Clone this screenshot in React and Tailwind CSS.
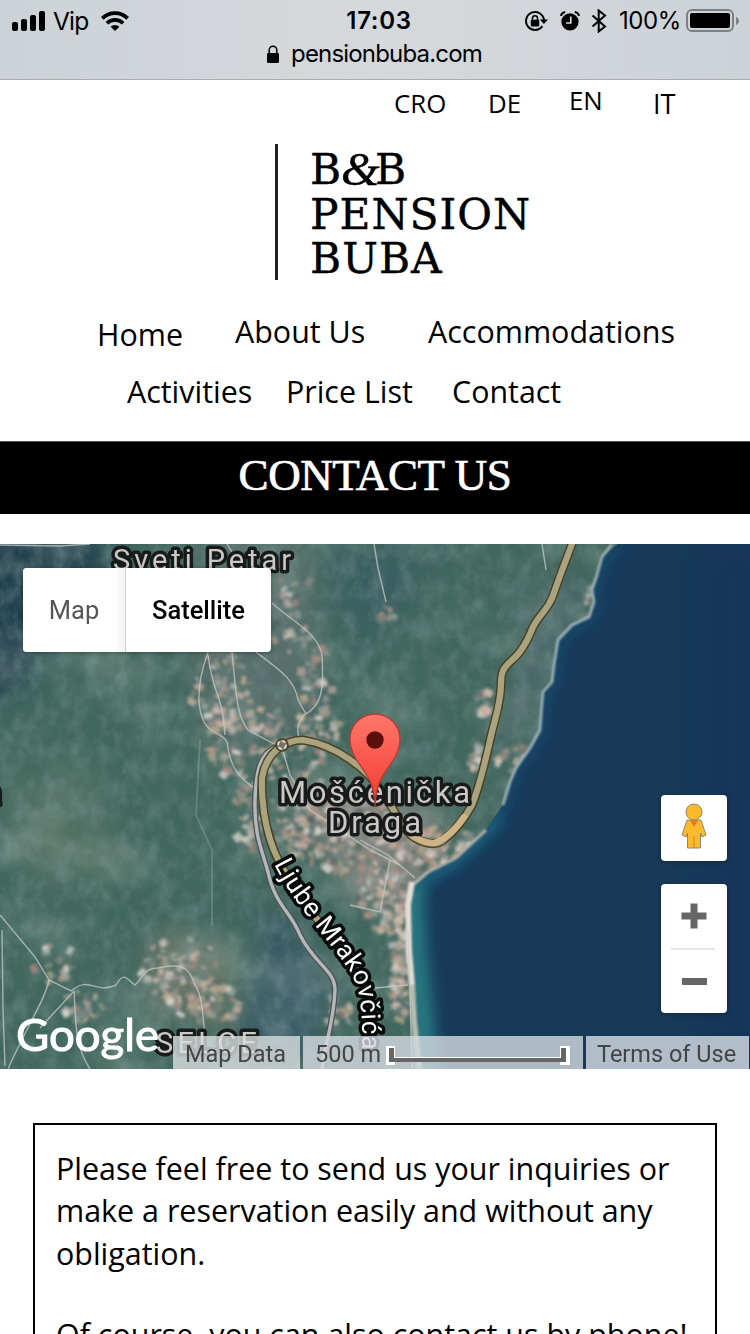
import React from "react";

function seeded(seed) {
  let s = seed;
  return () => {
    s = (s * 16807) % 2147483647;
    return s / 2147483647;
  };
}

const clusters = [
  // cx, cy, rx, ry, count
  [222, 690, 32, 45, 80],
  [245, 740, 35, 40, 70],
  [300, 740, 42, 45, 80],
  [315, 675, 18, 50, 40],
  [285, 620, 22, 30, 25],
  [270, 580, 40, 30, 25],
  [300, 820, 45, 35, 110],
  [350, 830, 60, 40, 160],
  [248, 810, 12, 35, 35],
  [435, 845, 50, 22, 130],
  [385, 895, 30, 35, 110],
  [400, 960, 9, 60, 100],
  [485, 700, 9, 13, 20],
  [478, 755, 10, 14, 20],
  [515, 755, 18, 18, 25],
  [180, 970, 38, 38, 90],
  [205, 1000, 34, 22, 45],
  [55, 960, 22, 20, 25],
  [85, 1003, 24, 14, 25],
  [340, 1010, 12, 18, 20],
  [386, 610, 8, 8, 9],
  [592, 600, 8, 18, 12],
];
const tones = ["#c5a9a0", "#d8c3b6", "#a0958c", "#e6dcd6", "#6c7c76", "#b48d83", "#a3aca4", "#c2ae90", "#4d6461"];

function houses() {
  const r = seeded(4242);
  const out = [];
  clusters.forEach(([cx, cy, rx, ry, n]) => {
    for (let i = 0; i < n; i++) {
      const a = r() * Math.PI * 2;
      const d = Math.sqrt(r());
      out.push({
        x: cx + Math.cos(a) * rx * d,
        y: cy + Math.sin(a) * ry * d,
        w: 3 + r() * 6,
        h: 3 + r() * 6,
        t: r() * 90,
        c: tones[Math.floor(r() * tones.length)],
        o: 0.35 + r() * 0.5,
      });
    }
  });
  return out;
}
const houseList = houses();

const coast =
  "M618 544 L602 557 L597 575 L592 590 L594 602 L589 617 L572 625 L558 640 L554 665 L552 682 L543 692 L541 715 L540 730 L530 748 L516 768 L510 782 L503 805 L486 830 L456 858 L428 872 L414 884 L410 905 L411 950 L414 990 L417 1020 L421 1069";
const mainRoad =
  "M572 544 C568 555 561 572 555 590 C549 610 540 613 533 627 C527 642 521 653 512 660 C503 668 501 672 501 684 C501 705 494 720 489 745 C483 770 480 785 472 805 C465 818 455 831 442 841 C434 846 424 843 415 838 C402 830 397 813 384 795 C368 768 335 745 303 740 C285 740 266 752 262 778 C261 810 268 845 284 870 C300 902 322 925 348 955";
const sideRoad =
  "M278 746 C260 752 256 770 255 800 C254 835 262 850 268 872 C275 905 291 912 300 935 C315 965 335 970 335 990 C334 1020 326 1040 322 1069";
const paths = [
  "M272 603 C290 620 318 632 322 655 C324 690 322 706 304 715 C296 725 296 735 302 742",
  "M208 652 C198 680 196 705 204 722 C212 736 222 732 227 742 C231 775 245 780 256 790",
  "M256 652 C280 670 295 680 298 700 L306 714",
  "M232 652 C236 690 236 715 248 730 L278 746",
  "M208 655 C214 700 222 690 225 735",
  "M0 915 L35 957 L49 980 L71 991 C90 975 95 995 116 985 C125 970 127 980 135 985 C145 975 145 968 158 968 C185 962 190 970 195 985 C204 998 202 1020 206 1040",
  "M49 980 C45 1000 25 1030 8 1069 M74 991 L40 1028 M74 991 C76 1020 74 1045 90 1069",
  "M2 930 L3 1010 L5 1066",
  "M374 544 L378 568 L386 602",
  "M542 544 L546 570",
  "M0 545 L60 546 L90 544",
  "M282 748 L290 775 L310 810 L370 850 L400 865",
  "M360 840 L388 855 L415 878 M350 905 L380 912 L390 860",
  "M227 544 L240 565",
  "M408 930 L410 985 L412 1069 M375 988 L408 985",
];

function MapArt() {
  return (
    <svg viewBox="0 544 750 525" className="absolute inset-0 h-[525px] w-[750px]">
      <defs>
        <filter id="noise" x="0" y="0" width="100%" height="100%">
          <feTurbulence type="fractalNoise" baseFrequency="0.07 0.05" numOctaves="5" seed="8" />
          <feColorMatrix values="0 0 0 0 0.18  0 0 0 0 0.29  0 0 0 0 0.29  1.1 0 0 0 -0.42" />
        </filter>
        <filter id="light" x="0" y="0" width="100%" height="100%">
          <feTurbulence type="fractalNoise" baseFrequency="0.012 0.016" numOctaves="6" seed="21" />
          <feColorMatrix values="0 0 0 0 0.45  0 0 0 0 0.53  0 0 0 0 0.46  0 1.3 0 0 -0.6" />
        </filter>
        <filter id="soft" x="-5%" y="-5%" width="110%" height="110%">
          <feGaussianBlur stdDeviation="1.4" />
        </filter>
        <filter id="crisp" x="-5%" y="-5%" width="110%" height="110%">
          <feGaussianBlur stdDeviation="0.8" />
        </filter>
        <filter id="wide" x="-30%" y="-30%" width="160%" height="160%">
          <feGaussianBlur stdDeviation="13" />
        </filter>
        <filter id="shore" filterUnits="userSpaceOnUse" x="350" y="500" width="420" height="620">
          <feGaussianBlur stdDeviation="7" />
        </filter>
        <clipPath id="sea">
          <path d={coast + " L750 1069 L750 544 Z"} />
        </clipPath>
        <linearGradient id="pin" x1="0" y1="0" x2="0" y2="1">
          <stop offset="0" stopColor="#ff776b" />
          <stop offset="1" stopColor="#f23a2f" />
        </linearGradient>
      </defs>
      <rect x="0" y="544" width="750" height="525" fill="#42675e" />
      <g filter="url(#wide)">
        <path d="M-20 530 L120 540 L60 620 L20 690 L-20 700 Z" fill="#233f50" />
        <path d="M330 544 L430 544 L410 600 L350 650 Z" fill="#3a5f60" />
        <path d="M540 600 L590 560 L560 640 L500 760 L480 800 Z" fill="#4c666a" />
        <path d="M270 900 L330 990 L300 1069 L240 1050 Z" fill="#385966" />
        <path d="M200 540 L310 540 L320 720 L230 760 L190 690 Z" fill="#566e6a" />
        <path d="M280 780 L440 810 L420 900 L360 900 Z" fill="#84847e" />
        <path d="M150 930 L230 950 L230 1030 L150 1010 Z" fill="#69786b" />
        <path d="M0 780 L100 760 L130 880 L30 890 Z" fill="#4f7064" />
      </g>
      <rect x="0" y="544" width="750" height="525" filter="url(#noise)" opacity="0.85" />
      <rect x="0" y="544" width="750" height="525" filter="url(#light)" opacity="0.45" />
      <g filter="url(#soft)">
        {houseList.map((h, i) => (
          <rect
            key={i}
            x={h.x}
            y={h.y}
            width={h.w}
            height={h.h}
            fill={h.c}
            opacity={h.o}
            transform={`rotate(${h.t} ${h.x} ${h.y})`}
          />
        ))}
      </g>
      <path d={coast + " L750 1069 L750 544 Z"} fill="#183a58" />
      <g clipPath="url(#sea)">
        <path d={coast} fill="none" stroke="#194c6d" strokeWidth="12" filter="url(#shore)" />
        <path d="M500 815 L456 858 L414 884" fill="none" stroke="#1d607a" strokeWidth="14" filter="url(#shore)" />
        <path d="M414 884 L412 905 L415 950 L422 1020 L428 1085" fill="none" stroke="#277780" strokeWidth="24" filter="url(#shore)" />
        <rect x="700" y="544" width="70" height="525" fill="#14335c" opacity="0.5" filter="url(#wide)" />
      </g>
      <g fill="none" strokeLinejoin="round" filter="url(#crisp)">
        <path d="M612 544 L602 557 L597 575 L592 590 L594 602 L589 617 L572 625 L558 640 L554 665 L552 682 L543 692 L541 715 L540 730 L530 748 L516 768 L510 782 L503 805" stroke="#a5b8bd" strokeWidth="2.6" />
        <path d="M486 830 L456 858 L428 872 L414 884" stroke="#b9b3a9" strokeWidth="3" />
        <path d="M412 882 L408 905 L409 950 L412 985" stroke="#e5ddd6" strokeWidth="6" />
        <path d="M412 985 L414 1020 L419 1069" stroke="#b5bdae" strokeWidth="6" />
      </g>
      <g fill="none" stroke="#c5cbc7" strokeOpacity="0.75" strokeWidth="1.4">
        {paths.map((d) => (
          <path key={d} d={d} />
        ))}
      </g>
      <path d="M200 740 L196 815 L212 850 L212 925" fill="none" stroke="#9fb0a8" strokeOpacity="0.35" strokeWidth="2" />
      <g fill="none" strokeLinecap="round">
        <path d={sideRoad} stroke="#4c5355" strokeWidth="6" />
        <path d={sideRoad} stroke="#b4b8ba" strokeWidth="3.4" />
        <path d={mainRoad} stroke="#48401f" strokeWidth="9" />
        <path d={mainRoad} stroke="#aaa380" strokeWidth="6.2" />
        <path d="M464 817 C455 831 442 841 434 843 C424 843 415 838 408 832" stroke="#cdb487" strokeWidth="6.2" />
      </g>
      <circle cx="282" cy="745" r="6" fill="#77736a" stroke="#48401f" strokeWidth="1.5" />
      <circle cx="282" cy="745" r="4" fill="none" stroke="#d2d2cc" strokeWidth="2" strokeDasharray="4 2" />

      <g fontFamily="Roboto, sans-serif" fill="#ccc8c4" stroke="#171b1b" strokeWidth="7" strokeLinejoin="round" paintOrder="stroke">
        <text x="113" y="570" fontSize="29" textLength="178">Sveti Petar</text>
        <text x="279" y="803" fontSize="31" textLength="191">Mošćenička</text>
        <text x="328" y="833" fontSize="31" textLength="93">Draga</text>
        <text x="156" y="1053" fontSize="29" textLength="101">SELCE</text>
        <text x="-16" y="804" fontSize="31">a</text>
      </g>
      <path id="street" d="M274 864 C292 902 324 934 344 963 C361 984 363 1005 362 1060" fill="none" />
      <text fontFamily="Roboto, sans-serif" fontSize="26" fill="#fff" stroke="#080a0a" strokeWidth="7" strokeLinejoin="round" paintOrder="stroke">
        <textPath href="#street" textLength="212">Ljube Mrakovčića</textPath>
      </text>
      <path
        d="M375 806 C374 780 365 773 356 759 C352 752 350 747 350 739 A25 25 0 0 1 400 739 C400 747 398 752 394 759 C385 773 376 780 375 806 Z"
        fill="url(#pin)"
        stroke="#b83a32"
        strokeWidth="1.3"
      />
      <circle cx="375" cy="740" r="8.7" fill="#5c100d" />
      <text x="16" y="1051" fontFamily="Lato, sans-serif" fontSize="44" fill="#fff" stroke="#fff" strokeWidth="1" textLength="143" lengthAdjust="spacingAndGlyphs">
        Google
      </text>
    </svg>
  );
}

function StatusBar() {
  return (
    <div className="h-20 border-b border-[#a9adb0] bg-linear-to-r from-[#cdd2d6] via-[#d5d9dc] to-[#cdd2d6] font-['Inter',sans-serif] text-black">
      <div className="grid h-10 grid-cols-[1fr_auto_1fr] items-center pl-3">
        <div className="flex items-center">
          <div className="flex h-5 w-[33px] items-end gap-[3px]">
            <i className="h-[9px] w-1.5 rounded-[2px] bg-black" />
            <i className="h-3 w-1.5 rounded-[2px] bg-black" />
            <i className="h-4 w-1.5 rounded-[2px] bg-black" />
            <i className="h-5 w-1.5 rounded-[2px] bg-black" />
          </div>
          <span className="ml-2 w-9 text-[24.5px] leading-10 tracking-[-0.8px]">Vip</span>
          <svg className="ml-3 h-5 w-7" viewBox="0 0 28 20">
            <g fill="none" stroke="#000" strokeWidth="3.7">
              <path d="M1.3 7.4 A18 18 0 0 1 26.7 7.4" />
              <path d="M5.9 12.2 A11.5 11.5 0 0 1 22.1 12.2" />
            </g>
            <path d="M14 20 L9.6 15.7 A6.3 6.3 0 0 1 18.4 15.7 Z" />
          </svg>
        </div>
        <span className="-ml-1 w-[72px] text-center text-[24px] leading-10 font-semibold tracking-[0.7px] whitespace-nowrap">
          17:03
        </span>
        <div className="flex items-center justify-end pr-[11px]">
          <svg className="h-6 w-6" viewBox="0 0 24 24">
            <path d="M18.4 17.2 A9 9 0 1 1 20 11" fill="none" stroke="#000" strokeWidth="2" />
            <path d="M15.8 10.5 H24 L19.9 15 Z" />
            <rect x="6.8" y="10.8" width="8.4" height="6.6" rx="0.8" />
            <path d="M8.5 11 V9.3 A2.5 2.5 0 0 1 13.5 9.3 V11" fill="none" stroke="#000" strokeWidth="1.5" />
          </svg>
          <svg className="ml-3 h-5 w-5" viewBox="0 0 20 20">
            <circle cx="10" cy="10.8" r="8.6" />
            <path d="M0.8 4.8 C1.6 2.6 3.1 1.4 5.2 1 M14.8 1 C16.9 1.4 18.4 2.6 19.2 4.8" fill="none" stroke="#000" strokeWidth="2" />
            <path d="M10.8 5.5 V12 H6" fill="none" stroke="#d3d7da" strokeWidth="1.7" />
          </svg>
          <svg className="ml-[11px] h-6 w-4" viewBox="0 0 16 24">
            <path d="M1.5 6.5 L14 17.5 L7.7 22.5 V1.5 L14 6.5 L1.5 17.5" fill="none" stroke="#000" strokeWidth="2" />
          </svg>
          <span className="ml-[12px] w-[63px] pt-px text-[24px] leading-10 tracking-[-0.4px] whitespace-nowrap">100%</span>
          <div className="ml-1 flex h-[23px] w-12 rounded-[6px] border-2 border-[#7d8183] p-[2px]">
            <div className="grow rounded-[2px] bg-black" />
          </div>
          <svg className="ml-0.5 h-2 w-[3px]" viewBox="0 0 3 8">
            <path d="M0 0 C4 2 4 6 0 8 Z" fill="#7d8183" />
          </svg>
        </div>
      </div>
      <div className="flex h-7 items-center pl-[267px]">
        <svg className="h-[18px] w-3" viewBox="0 0 12 18">
          <rect y="8" width="12" height="10" rx="1.3" />
          <path d="M2.2 8.5 V5 A3.8 3.8 0 0 1 9.8 5 V8.5" fill="none" stroke="#000" strokeWidth="1.5" />
        </svg>
        <span className="ml-3 text-[24px] leading-7 tracking-[-0.82px]">pensionbuba.com</span>
      </div>
    </div>
  );
}

export default function App() {
  return (
    <div className="h-[1334px] w-[750px] overflow-hidden bg-white font-['Open_Sans',sans-serif] text-black">
      <StatusBar />
      <header className="h-[361px]">
        <nav className="flex h-[48px] items-start pl-[394px] text-[25.8px] leading-[46px]">
          <a className="w-[94px]">CRO</a>
          <a className="w-[81px]">DE</a>
          <a className="-mt-[3px] w-[84px]">EN</a>
          <a className="pt-px text-[27px]">IT</a>
        </nav>
        <div className="mt-4 ml-[275px] h-[136px] border-l-[3px] border-[#222] pt-[4px] pl-[32px] font-['DejaVu_Serif',serif] text-[42.4px] leading-[44.7px] tracking-[1px] [-webkit-text-stroke:0.4px_black]">
          <div className="flex">
            <span className="w-[31px]">B</span>
            <span className="w-[34px] origin-left scale-x-108 font-['Liberation_Serif',serif] text-[46px] tracking-normal italic">&amp;</span>
            <span>B</span>
          </div>
          <div>PENSION</div>
          <div>BUBA</div>
        </div>
        <nav className="mt-[29px] flex items-start pl-[97px] text-[30.45px] leading-[50px]">
          <a className="w-[138px]">Home</a>
          <a className="-mt-[3px] w-[193px]">About Us</a>
          <a className="-mt-[3px]">Accommodations</a>
        </nav>
        <nav className="mt-2 flex pl-[127px] text-[30.4px] leading-[50px]">
          <a className="w-[159px]">Activities</a>
          <a className="w-[166px]">Price List</a>
          <a>Contact</a>
        </nav>
      </header>
      <h1 className="h-[73px] border-t border-[#555] bg-black text-center font-['Liberation_Serif',serif] text-[45px] leading-[66px] tracking-[-0.4px] text-white [-webkit-text-stroke:0.7px_white]">
        CONTACT US
      </h1>
      <section className="relative mt-[30px] h-[525px] overflow-hidden font-['Roboto',sans-serif]">
        <MapArt />
        <div className="absolute top-6 left-[23px] flex h-[84px] w-[248px] overflow-hidden rounded-[4px] bg-white text-[25.5px] leading-[85px] shadow-[0_1px_4px_rgba(0,0,0,0.35)]">
          <span className="w-[103px] border-r border-[#d0d0d0] bg-linear-to-r from-white from-90% to-[#f1f1f1] text-center text-[#565656]">Map</span>
          <span className="grow text-center font-medium">Satellite</span>
        </div>
        <div className="absolute top-[251px] left-[661px] flex h-[66px] w-[66px] items-center justify-center rounded-[4px] bg-white shadow-[0_1px_4px_rgba(0,0,0,0.35)]">
          <svg className="-mt-1 h-[46px] w-[26px]" viewBox="0 0 26 46">
            <path d="M6 17 H20 L25 32 L21 34 L19.5 30 V45 H6.5 V30 L5 34 L1 32 Z" fill="#fbb92b" stroke="#8f8973" strokeWidth="1" />
            <path d="M8.5 17 H17.5 L13 24 Z" fill="#e47d20" />
            <path d="M13 33 V45" stroke="#b18a39" strokeWidth="1" />
            <circle cx="13" cy="9" r="8" fill="#fbb92b" stroke="#8f8973" strokeWidth="1" />
          </svg>
        </div>
        <div className="absolute top-[340px] left-[661px] flex h-[129px] w-[66px] flex-col items-center rounded-[4px] bg-white shadow-[0_1px_4px_rgba(0,0,0,0.35)]">
          <svg className="mt-[19px] h-[26px] w-[26px]" viewBox="0 0 26 26">
            <path d="M13 0.5 V25.5 M0.5 13 H25.5" stroke="#666" strokeWidth="7" />
          </svg>
          <div className="mt-[19px] -ml-0.5 h-0.5 w-11 bg-[#e6e6e6]" />
          <div className="mt-7 h-[7px] w-[25px] bg-[#666]" />
        </div>
        <div className="absolute bottom-0 left-[173px] flex h-[33px] w-[576px] gap-[3px] text-[23.5px] leading-[36px] whitespace-nowrap text-[#444]">
          <div className="w-[127px] bg-[#d9dfe0]/80 pl-3">Map Data</div>
          <div className="flex w-[280px] bg-[#d4dbe0]/80 pl-3">
            500 m
            <svg className="mt-[9px] ml-[5px] h-5 w-[184px]" viewBox="0 0 184 20">
              <path d="M0 1 H9 V12 H174 V1 H184 V20 H174 V16 H9 V20 H0 Z" fill="#fff" />
              <path d="M3 3 H8 V13 H175 V3 H180 V17 H3 Z" fill="#666" />
            </svg>
          </div>
          <div className="grow bg-[#ccd5dc]/85 pl-[11px]">Terms of Use</div>
        </div>
      </section>
      <section className="mt-[54px] ml-[33px] h-[300px] w-[684px] border-2 border-black pt-[22px] pl-[21px] text-[30.45px] leading-[42.3px] whitespace-nowrap">
        <p>Please feel free to send us your inquiries or</p>
        <p>make a reservation easily and without any</p>
        <p>obligation.</p>
        <p className="mt-[39px]">Of course, you can also contact us by phone!</p>
      </section>
    </div>
  );
}
